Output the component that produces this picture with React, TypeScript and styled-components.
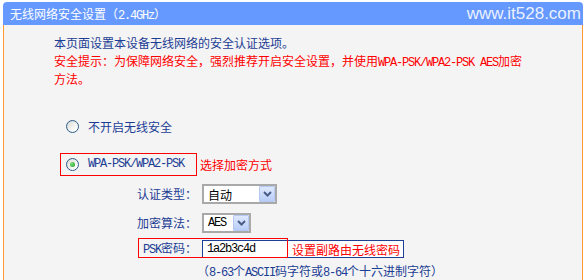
import React from 'react';
import styled, { createGlobalStyle } from 'styled-components';

const GlobalStyle = createGlobalStyle`
  html, body {
    margin: 0;
    padding: 0;
    background: #ffffff;
  }
  body {
    font-family: "Noto Sans CJK SC", "Noto Sans", sans-serif;
    font-size: 12px;
    color: #1c3d94;
  }
`;

const Frame = styled.div`
  width: 580px;
  height: 278px;
  margin-left: 3px;
  padding-top: 2px;
  display: flex;
  flex-direction: column;
`;
const Header = styled.div`
  height: 23px;
  flex: none;
  background: #6699ff;
  border-radius: 4px 4px 0 0;
  display: flex;
  align-items: center;
  justify-content: space-between;
  padding: 0 2px 0 7px;
  color: #ffffff;
`;
const Title = styled.div`
  font-size: 12px;
  height: 23px;
  line-height: 23px;
  white-space: nowrap;
`;
const Watermark = styled.div`
  font-family: "Liberation Sans", Arial, sans-serif;
  font-size: 17px;
  color: rgba(255, 255, 255, 0.88);
  line-height: 23px;
`;
const Body = styled.div`
  flex: 1;
  background: #f4f4f4;
  border-left: 1px solid #ff9933;
  border-right: 1px solid #ff9933;
  padding: 9px 0 0 50px;
`;
const Mono = styled.span`
  font-family: "Liberation Mono", "Courier New", monospace;
  font-size: 12px;
  letter-spacing: -1.2px;
  line-height: 1;
`;
const Intro = styled.p`
  margin: 0;
  height: 18px;
  line-height: 18px;
  white-space: nowrap;
`;
const Warn = styled.span<{ $gap?: number }>`
  color: #ff0000;
  margin-left: ${(p) => p.$gap || 0}px;
  white-space: nowrap;
`;
const RadioRow = styled.div<{ $top: number }>`
  display: flex;
  align-items: center;
  height: 24px;
  margin-top: ${(p) => p.$top}px;
`;
const Option = styled.label<{ $marked?: boolean }>`
  display: flex;
  align-items: center;
  gap: 9px;
  box-sizing: border-box;
  height: ${(p) => (p.$marked ? 23 : 24)}px;
  width: 137px;
  margin-left: 6px;
  padding-left: 5px;
  border: 1px solid ${(p) => (p.$marked ? '#ff0000' : 'transparent')};
`;
const Radio = styled.span<{ $checked?: boolean }>`
  width: 13px;
  height: 13px;
  box-sizing: border-box;
  border-radius: 50%;
  border: 1px solid #2a5a8a;
  background: linear-gradient(135deg, #d8d8d2, #ffffff 80%);
  display: flex;
  align-items: center;
  justify-content: center;
  &::after {
    content: '';
    display: ${(p) => (p.$checked ? 'block' : 'none')};
    width: 5px;
    height: 5px;
    border-radius: 50%;
    background: radial-gradient(circle at 35% 35%, #7ee07e, #1a9a1a);
  }
`;
const Form = styled.div`
  display: grid;
  grid-template-columns: 143px auto;
  column-gap: 5px;
  align-items: center;
  margin-top: 8px;
`;
const Label = styled.div<{ $top?: number }>`
  text-align: right;
  white-space: nowrap;
  height: 20px;
  line-height: 20px;
  margin-top: ${(p) => p.$top || 0}px;
`;
const Field = styled.div<{ $top?: number }>`
  display: flex;
  align-items: center;
  height: 20px;
  margin-top: ${(p) => p.$top || 0}px;
`;
const Select = styled.div<{ $width: number }>`
  width: ${(p) => p.$width}px;
  height: 20px;
  box-sizing: border-box;
  border: 2px solid #a9a9a9;
  background: #ffffff;
  display: flex;
  align-items: center;
  justify-content: space-between;
  padding-left: 4px;
  color: #000000;
`;
const DropButton = styled.span`
  width: 16px;
  height: 16px;
  box-sizing: border-box;
  border: 1px solid #b5c8f2;
  border-radius: 1px;
  background: linear-gradient(#dfe8fd, #b8cdf7);
  display: flex;
  align-items: center;
  justify-content: center;
`;
const PskField = styled.div`
  position: relative;
  display: flex;
  align-items: center;
  height: 20px;
  margin-top: 5px;
`;
const TextBox = styled.div`
  width: 202px;
  height: 18px;
  margin-top: 2px;
  box-sizing: border-box;
  border: 1px solid #1f3f94;
  background: #ffffff;
  display: flex;
  align-items: center;
  color: #000000;
  padding-left: 4px;
`;
const ValueText = styled(Mono)`
  width: 85px;
`;
const Highlight = styled.span`
  position: absolute;
  left: -64px;
  top: 0;
  width: 150px;
  height: 20px;
  box-sizing: border-box;
  border: 1px solid #ff0000;
  pointer-events: none;
`;
const Hint = styled.div`
  grid-column: 2;
  margin-left: -5px;
  margin-top: 5px;
  height: 16px;
  line-height: 16px;
  white-space: nowrap;
`;

const Chevron = () => (
  <svg width="9" height="6" viewBox="0 0 9 6">
    <path d="M1 1 L4.5 4.5 L8 1" fill="none" stroke="#4a5d86" strokeWidth="2" />
  </svg>
);

const App: React.FC = () => (
  <>
    <GlobalStyle />
    <Frame>
      <Header>
        <Title>
          无线网络安全设置（<Mono>2.4GHz</Mono>）
        </Title>
        <Watermark>www.it528.com</Watermark>
      </Header>
      <Body>
        <Intro>本页面设置本设备无线网络的安全认证选项。</Intro>
        <Intro>
          <Warn>
            安全提示：为保障网络安全，强烈推荐开启安全设置，并使用<Mono>WPA-PSK/WPA2-PSK AES</Mono>加密
          </Warn>
        </Intro>
        <Intro>
          <Warn>方法。</Warn>
        </Intro>

        <RadioRow $top={26}>
          <Option>
            <Radio />
            <span>不开启无线安全</span>
          </Option>
        </RadioRow>
        <RadioRow $top={14}>
          <Option $marked>
            <Radio $checked />
            <Mono>WPA-PSK/WPA2-PSK</Mono>
          </Option>
          <Warn $gap={3}>选择加密方式</Warn>
        </RadioRow>

        <Form>
          <Label>认证类型：</Label>
          <Field>
            <Select $width={75}>
              <span>自动</span>
              <DropButton>
                <Chevron />
              </DropButton>
            </Select>
          </Field>
          <Label $top={9}>加密算法：</Label>
          <Field $top={9}>
            <Select $width={49}>
              <Mono>AES</Mono>
              <DropButton>
                <Chevron />
              </DropButton>
            </Select>
          </Field>
          <Label $top={5}>
            <Mono>PSK</Mono>密码：
          </Label>
          <PskField>
            <Highlight />
            <TextBox>
              <ValueText>1a2b3c4d</ValueText>
              <Warn>设置副路由无线密码</Warn>
            </TextBox>
          </PskField>
          <Hint>
            （<Mono>8-63</Mono>个<Mono>ASCII</Mono>码字符或<Mono>8-64</Mono>个十六进制字符）
          </Hint>
        </Form>
      </Body>
    </Frame>
  </>
);

export default App;
